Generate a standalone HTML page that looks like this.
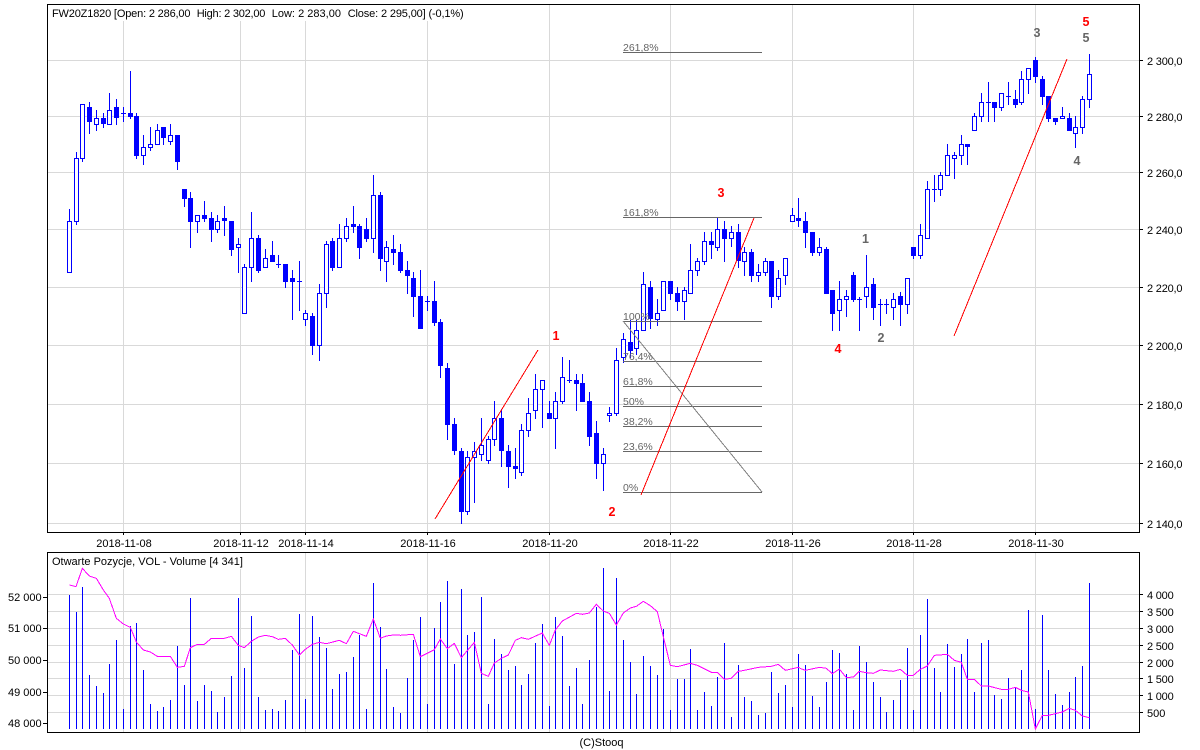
<!DOCTYPE html>
<html><head><meta charset="utf-8"><title>FW20Z1820</title>
<style>html,body{margin:0;padding:0;background:#fff;width:1200px;height:750px;overflow:hidden}svg{display:block}text{font-family:"Liberation Sans",sans-serif;font-size:11px;fill:#000}.f text{font-size:10.5px;fill:#666}.a text{font-size:12.5px;font-weight:bold;text-anchor:middle}</style></head>
<body>
<svg width="1200" height="750" viewBox="0 0 1200 750" xmlns="http://www.w3.org/2000/svg">
<g shape-rendering="crispEdges" fill="none">
<path stroke="#d9d9d9" d="M48 60.5H1139M48 116.5H1139M48 172.5H1139M48 229.5H1139M48 287.5H1139M48 345.5H1139M48 404.5H1139M48 463.5H1139M48 523.5H1139M123.5 5V532M240.5 5V532M305.5 5V532M427.5 5V532M549.5 5V532M670.5 5V532M792.5 5V532M913.5 5V532M1035.5 5V532"/>
<path stroke="#d9d9d9" d="M48 594.5H1139M48 611.5H1139M48 628.5H1139M48 645.5H1139M48 662.5H1139M48 678.5H1139M48 695.5H1139M48 712.5H1139M123.5 553V732M240.5 553V732M305.5 553V732M427.5 553V732M549.5 553V732M670.5 553V732M792.5 553V732M913.5 553V732M1035.5 553V732"/>
<rect x="48" y="5" width="417" height="16" fill="#fff"/>
<rect x="48" y="553" width="195" height="16" fill="#fff"/>
<path stroke="#00f" d="M69.5 209V273M76.5 152V225M82.5 104V162M89.5 102V134M96.5 110V131M103.5 113V128M109.5 93V125M116.5 99V125M123.5 107V122M121 113.5h5M130.5 71V119M136.5 113V159M143.5 135V165M150.5 127V151M157.5 124V145M163.5 127V145M170.5 124V145M177.5 135V170M184.5 189V207M190.5 192V248M197.5 215V233M204.5 201V222M211.5 212V242M217.5 215V233M224.5 206V236M231.5 221V256M238.5 238V273M244.5 264V314M251.5 212V282M258.5 235V273M265.5 249V268M272.5 241V262M278.5 255V268M276 264.5h5M285.5 264V288M292.5 270V320M299.5 261V311M297 281.5h5M305.5 310V326M312.5 313V355M319.5 284V361M326.5 241V308M332.5 238V271M339.5 224V268M346.5 218V242M353.5 206V233M359.5 224V259M366.5 218V242M373.5 175V253M380.5 192V271M386.5 241V282M393.5 235V265M400.5 244V273M407.5 261V294M413.5 272V317M420.5 270V329M427.5 296V311M425 301.5h5M434.5 281V326M440.5 319V378M447.5 363V440M454.5 418V455M461.5 448V524M467.5 451V515M474.5 442V503M481.5 418V461M488.5 436V464M494.5 401V446M501.5 409V467M508.5 445V488M515.5 448V479M521.5 424V476M528.5 398V437M535.5 374V419M542.5 380V428M549.5 401V419M555.5 392V449M562.5 357V404M569.5 360V383M567 380.5h5M576.5 374V411M582.5 374V402M589.5 392V446M596.5 421V479M603.5 448V491M609.5 407V422M616.5 348V416M623.5 333V363M630.5 320V358M636.5 320V355M643.5 272V331M650.5 281V329M657.5 299V326M663.5 281V311M670.5 281V300M677.5 287V311M684.5 287V320M690.5 244V294M697.5 258V276M704.5 232V265M711.5 232V259M717.5 218V251M724.5 221V262M731.5 226V247M738.5 224V268M744.5 247V276M751.5 249V282M758.5 264V282M765.5 258V276M771.5 261V308M778.5 270V300M785.5 258V285M792.5 208V222M798.5 198V227M805.5 212V248M812.5 232V256M819.5 238V256M826.5 247V294M832.5 290V331M839.5 281V331M846.5 290V317M853.5 272V302M859.5 297V331M857 299.5h5M866.5 255V308M873.5 278V320M880.5 299V326M878 304.5h5M886.5 299V314M884 304.5h5M893.5 293V320M900.5 292V326M907.5 278V314M913.5 247V259M920.5 224V259M927.5 181V239M934.5 175V202M932 189.5h5M940.5 172V196M947.5 144V176M954.5 152V179M961.5 135V165M967.5 144V165M974.5 113V131M981.5 93V122M988.5 82V122M986 102.5h5M994.5 102V122M1001.5 93V111M1008.5 82V105M1006 96.5h5M1015.5 90V108M1021.5 71V105M1028.5 68V94M1035.5 57V83M1042.5 76V105M1048.5 96V122M1055.5 118V125M1062.5 107V119M1069.5 113V131M1075.5 116V148M1082.5 96V134M1089.5 54V108"/>
<path stroke="#00f" fill="#fff" d="M67.5 221.5h4V272.5h-4zM74.5 158.5h4V221.5h-4zM80.5 104.5h4V158.5h-4zM94.5 118.5h4V124.5h-4zM107.5 110.5h4V124.5h-4zM141.5 147.5h4V155.5h-4zM148.5 144.5h4V147.5h-4zM155.5 130.5h4V144.5h-4zM168.5 135.5h4V141.5h-4zM195.5 215.5h4V221.5h-4zM215.5 221.5h4V229.5h-4zM236.5 244.5h4V247.5h-4zM242.5 267.5h4V313.5h-4zM249.5 238.5h4V267.5h-4zM263.5 258.5h4V267.5h-4zM303.5 313.5h4V319.5h-4zM317.5 293.5h4V345.5h-4zM324.5 244.5h4V293.5h-4zM337.5 238.5h4V267.5h-4zM344.5 226.5h4V238.5h-4zM371.5 195.5h4V238.5h-4zM384.5 247.5h4V261.5h-4zM465.5 457.5h4V511.5h-4zM472.5 451.5h4V457.5h-4zM479.5 445.5h4V454.5h-4zM486.5 439.5h4V460.5h-4zM492.5 418.5h4V439.5h-4zM519.5 430.5h4V472.5h-4zM526.5 413.5h4V430.5h-4zM533.5 389.5h4V410.5h-4zM540.5 380.5h4V389.5h-4zM553.5 401.5h4V418.5h-4zM560.5 377.5h4V401.5h-4zM601.5 454.5h4V463.5h-4zM607.5 413.5h4V415.5h-4zM614.5 360.5h4V413.5h-4zM621.5 339.5h4V357.5h-4zM634.5 330.5h4V348.5h-4zM641.5 284.5h4V330.5h-4zM655.5 313.5h4V319.5h-4zM661.5 281.5h4V310.5h-4zM682.5 290.5h4V301.5h-4zM688.5 270.5h4V293.5h-4zM695.5 261.5h4V270.5h-4zM702.5 241.5h4V261.5h-4zM715.5 229.5h4V247.5h-4zM729.5 232.5h4V238.5h-4zM742.5 252.5h4V261.5h-4zM756.5 272.5h4V275.5h-4zM763.5 261.5h4V272.5h-4zM776.5 278.5h4V296.5h-4zM783.5 258.5h4V275.5h-4zM790.5 215.5h4V221.5h-4zM817.5 247.5h4V252.5h-4zM837.5 299.5h4V310.5h-4zM844.5 296.5h4V299.5h-4zM864.5 287.5h4V296.5h-4zM891.5 299.5h4V307.5h-4zM905.5 278.5h4V304.5h-4zM918.5 235.5h4V255.5h-4zM925.5 189.5h4V238.5h-4zM938.5 175.5h4V189.5h-4zM945.5 155.5h4V175.5h-4zM952.5 155.5h4V158.5h-4zM959.5 144.5h4V155.5h-4zM972.5 116.5h4V130.5h-4zM979.5 102.5h4V116.5h-4zM999.5 93.5h4V107.5h-4zM1019.5 79.5h4V102.5h-4zM1026.5 68.5h4V79.5h-4zM1060.5 116.5h4V118.5h-4zM1073.5 127.5h4V133.5h-4zM1080.5 99.5h4V127.5h-4zM1087.5 74.5h4V99.5h-4z"/>
<path fill="#00f" d="M87 107h5V122h-5zM101 118h5V124h-5zM114 107h5V118h-5zM128 113h5V117h-5zM134 116h5V156h-5zM161 127h5V138h-5zM175 135h5V162h-5zM182 189h5V199h-5zM188 198h5V222h-5zM202 215h5V219h-5zM209 218h5V230h-5zM222 218h5V221h-5zM229 221h5V250h-5zM256 238h5V271h-5zM270 255h5V262h-5zM283 264h5V282h-5zM290 278h5V282h-5zM310 316h5V346h-5zM330 241h5V268h-5zM351 224h5V227h-5zM357 226h5V248h-5zM364 229h5V239h-5zM378 195h5V259h-5zM391 249h5V253h-5zM398 252h5V271h-5zM405 270h5V276h-5zM411 278h5V297h-5zM418 296h5V329h-5zM432 301h5V323h-5zM438 322h5V366h-5zM445 368h5V425h-5zM452 424h5V451h-5zM459 451h5V512h-5zM499 418h5V451h-5zM506 451h5V467h-5zM513 466h5V469h-5zM547 413h5V419h-5zM574 380h5V384h-5zM580 383h5V402h-5zM587 401h5V437h-5zM594 433h5V464h-5zM628 342h5V351h-5zM648 287h5V319h-5zM668 281h5V294h-5zM675 293h5V302h-5zM709 241h5V245h-5zM722 229h5V239h-5zM736 232h5V261h-5zM749 252h5V276h-5zM769 261h5V297h-5zM796 218h5V221h-5zM803 221h5V233h-5zM810 232h5V253h-5zM824 249h5V294h-5zM830 290h5V314h-5zM851 275h5V300h-5zM871 284h5V308h-5zM898 296h5V305h-5zM911 247h5V256h-5zM965 144h5V147h-5zM992 102h5V108h-5zM1013 99h5V105h-5zM1033 60h5V77h-5zM1040 79h5V97h-5zM1046 96h5V119h-5zM1053 118h5V122h-5zM1067 118h5V131h-5z"/>
<path stroke="#666" d="M623 52.5H762M623 217.5H762M623 321.5H762M623 361.5H762M623 386.5H762M623 406.5H762M623 426.5H762M623 451.5H762M623 492.5H762"/>
<path stroke="#808080" d="M623 321L762 492"/>
<path stroke="#f00" d="M435 519L538 350M641 495L754 218M954 336L1067 59"/>
<path stroke="#00f" d="M69.5 595V729M76.5 612V729M82.5 587V729M89.5 675V729M96.5 686V729M103.5 693V729M109.5 664V729M116.5 640V729M123.5 709V729M130.5 626V729M136.5 623V729M143.5 670V729M150.5 704V729M157.5 711V729M163.5 707V729M170.5 700V729M177.5 646V729M184.5 685V729M190.5 598V729M197.5 701V729M204.5 685V729M211.5 691V729M217.5 712V729M224.5 697V729M231.5 676V729M238.5 598V729M244.5 668V729M251.5 616V729M258.5 697V729M265.5 710V729M272.5 709V729M278.5 711V729M285.5 700V729M292.5 650V729M299.5 614V729M305.5 699V729M312.5 616V729M319.5 637V729M326.5 648V729M332.5 689V729M339.5 674V729M346.5 672V729M353.5 657V729M359.5 635V729M366.5 709V729M373.5 583V729M380.5 627V729M386.5 669V729M393.5 707V729M400.5 713V729M407.5 678V729M413.5 640V729M420.5 617V729M427.5 704V729M434.5 628V729M440.5 602V729M447.5 581V729M454.5 664V729M461.5 589V729M467.5 635V729M474.5 632V729M481.5 597V729M488.5 704V729M494.5 639V729M501.5 654V729M508.5 670V729M515.5 666V729M521.5 685V729M528.5 674V729M535.5 643V729M542.5 624V729M549.5 706V729M555.5 617V729M562.5 636V729M569.5 686V729M576.5 668V729M582.5 704V729M589.5 660V729M596.5 607V729M603.5 568V729M609.5 691V729M616.5 578V729M623.5 640V729M630.5 662V729M636.5 694V729M643.5 656V729M650.5 666V729M657.5 675V729M663.5 629V729M670.5 710V729M677.5 679V729M684.5 679V729M690.5 649V729M697.5 710V729M704.5 692V729M711.5 706V729M717.5 677V729M724.5 643V729M731.5 717V729M738.5 665V729M744.5 697V729M751.5 701V729M758.5 715V729M765.5 713V729M771.5 672V729M778.5 693V729M785.5 685V729M792.5 707V729M798.5 654V729M805.5 665V729M812.5 696V729M819.5 707V729M826.5 682V729M832.5 650V729M839.5 653V729M846.5 674V729M853.5 710V729M859.5 646V729M866.5 662V729M873.5 682V729M880.5 697V729M886.5 712V729M893.5 700V729M900.5 680V729M907.5 648V729M913.5 710V729M920.5 635V729M927.5 599V729M934.5 668V729M940.5 692V729M947.5 644V729M954.5 667V729M961.5 654V729M967.5 639V729M974.5 692V729M981.5 643V729M988.5 640V729M994.5 695V729M1001.5 699V729M1008.5 678V729M1015.5 687V729M1021.5 670V729M1028.5 610V729M1035.5 709V729M1042.5 615V729M1048.5 670V729M1055.5 694V729M1062.5 705V729M1069.5 692V729M1075.5 677V729M1082.5 666V729M1089.5 583V729"/>
<g stroke="#f0f">
<polyline vector-effect="non-scaling-stroke" transform="translate(0 540) scale(.33333)" points="208,135 228,140 247,85 268,108 289,115 310,150 328,175 349,235 370,252 391,262 409,306 430,330 451,336 472,349 511,349 532,382 553,379 571,323 592,313 613,313 634,295 673,295 694,289 715,316 733,323 754,304 775,291 796,286 817,290 835,298 856,295 877,315 898,345 916,328 937,313 958,307 979,311 1018,301 1039,311 1060,274 1099,289 1120,237 1141,295 1159,288 1180,285 1200,285"/>
<polyline vector-effect="non-scaling-stroke" transform="translate(400 540) scale(.33333)" points="0,286 40,283 61,350 103,329 121,297 142,326 163,310 184,353 223,307 244,400 265,409 283,369 304,355 325,345 346,301 364,293 385,298 427,279 448,316 466,270 487,243 529,220 547,223 568,219 589,193 610,213 628,220 649,255 670,219 691,204 709,199 730,184 751,197 772,215 790,290 811,376 832,380 871,370 892,376 934,397 952,397 973,418 994,415 1015,394 1033,391 1075,382 1114,379 1135,373 1156,391 1195,382 1200,384"/>
<polyline vector-effect="non-scaling-stroke" transform="translate(800 540) scale(.33333)" points="0,385 16,391 58,382 79,385 97,401 118,387 139,413 160,411 178,394 199,398 220,400 241,390 280,394 301,388 322,406 340,406 361,388 382,378 403,346 442,343 463,361 484,367 502,418 523,418 544,438 565,438 604,448 625,448 646,442 664,451 685,456 706,567 727,526 745,526 787,516 808,505 826,511 847,528 868,533"/>
</g>
<rect x="47.5" y="4.5" width="1092" height="528" stroke="#000"/>
<rect x="47.5" y="552.5" width="1092" height="180" stroke="#000"/>
<path stroke="#000" d="M1140 60.5h3M1140 116.5h3M1140 172.5h3M1140 229.5h3M1140 287.5h3M1140 345.5h3M1140 404.5h3M1140 463.5h3M1140 523.5h3M123.5 533v2M240.5 533v2M305.5 533v2M427.5 533v2M549.5 533v2M670.5 533v2M792.5 533v2M913.5 533v2M1035.5 533v2M43 597.5h4M43 628.5h4M43 660.5h4M43 692.5h4M43 723.5h4M1140 594.5h3M1140 611.5h3M1140 628.5h3M1140 645.5h3M1140 662.5h3M1140 678.5h3M1140 695.5h3M1140 712.5h3"/>
</g>
<text x="52" y="17" textLength="138.5">FW20Z1820 [Open: 2 286,00</text>
<text x="196.7" y="17" textLength="68.7">High: 2 302,00</text>
<text x="271.7" y="17" textLength="69.3">Low: 2 283,00</text>
<text x="347.7" y="17" textLength="116">Close: 2 295,00] (-0,1%)</text>
<text x="52" y="565">Otwarte Pozycje, VOL - Volume [4 341]</text>
<g>
<text x="1147" y="65" textLength="35.5">2 300,0</text><text x="1147" y="121" textLength="35.5">2 280,0</text><text x="1147" y="177" textLength="35.5">2 260,0</text><text x="1147" y="234" textLength="35.5">2 240,0</text><text x="1147" y="292" textLength="35.5">2 220,0</text><text x="1147" y="350" textLength="35.5">2 200,0</text><text x="1147" y="409" textLength="35.5">2 180,0</text><text x="1147" y="468" textLength="35.5">2 160,0</text><text x="1147" y="528" textLength="35.5">2 140,0</text>
<text x="8" y="601">52 000</text><text x="8" y="632">51 000</text><text x="8" y="664">50 000</text><text x="8" y="696">49 000</text><text x="8" y="727">48 000</text>
<text x="1147" y="599" textLength="26.7">4 000</text><text x="1147" y="616" textLength="26.7">3 500</text><text x="1147" y="633" textLength="26.7">3 000</text><text x="1147" y="650" textLength="26.7">2 500</text><text x="1147" y="667" textLength="26.7">2 000</text><text x="1147" y="683" textLength="26.7">1 500</text><text x="1147" y="700" textLength="26.7">1 000</text><text x="1147" y="717">500</text>
</g>
<g text-anchor="middle">
<text x="124" y="547">2018-11-08</text><text x="241" y="547">2018-11-12</text><text x="306" y="547">2018-11-14</text><text x="428" y="547">2018-11-16</text><text x="550" y="547">2018-11-20</text><text x="671" y="547">2018-11-22</text><text x="793" y="547">2018-11-26</text><text x="914" y="547">2018-11-28</text><text x="1036" y="547">2018-11-30</text>
<text x="601.5" y="746">(C)Stooq</text>
</g>
<g class="f">
<text x="623" y="51">261,8%</text><text x="623" y="216">161,8%</text><text x="623" y="320">100%</text><text x="623" y="360">76,4%</text><text x="623" y="385">61,8%</text><text x="623" y="405">50%</text><text x="623" y="425">38,2%</text><text x="623" y="450">23,6%</text><text x="623" y="491">0%</text>
</g>
<g class="a">
<text x="556" y="340" style="fill:#f00">1</text><text x="612" y="516" style="fill:#f00">2</text><text x="721" y="197" style="fill:#f00">3</text><text x="838" y="353" style="fill:#f00">4</text><text x="1086" y="26" style="fill:#f00">5</text>
<text x="865.5" y="243" style="fill:#666">1</text><text x="881" y="342" style="fill:#666">2</text><text x="1037" y="37" style="fill:#666">3</text><text x="1077" y="165" style="fill:#666">4</text><text x="1086" y="42" style="fill:#666">5</text>
</g>
</svg>
</body></html>
